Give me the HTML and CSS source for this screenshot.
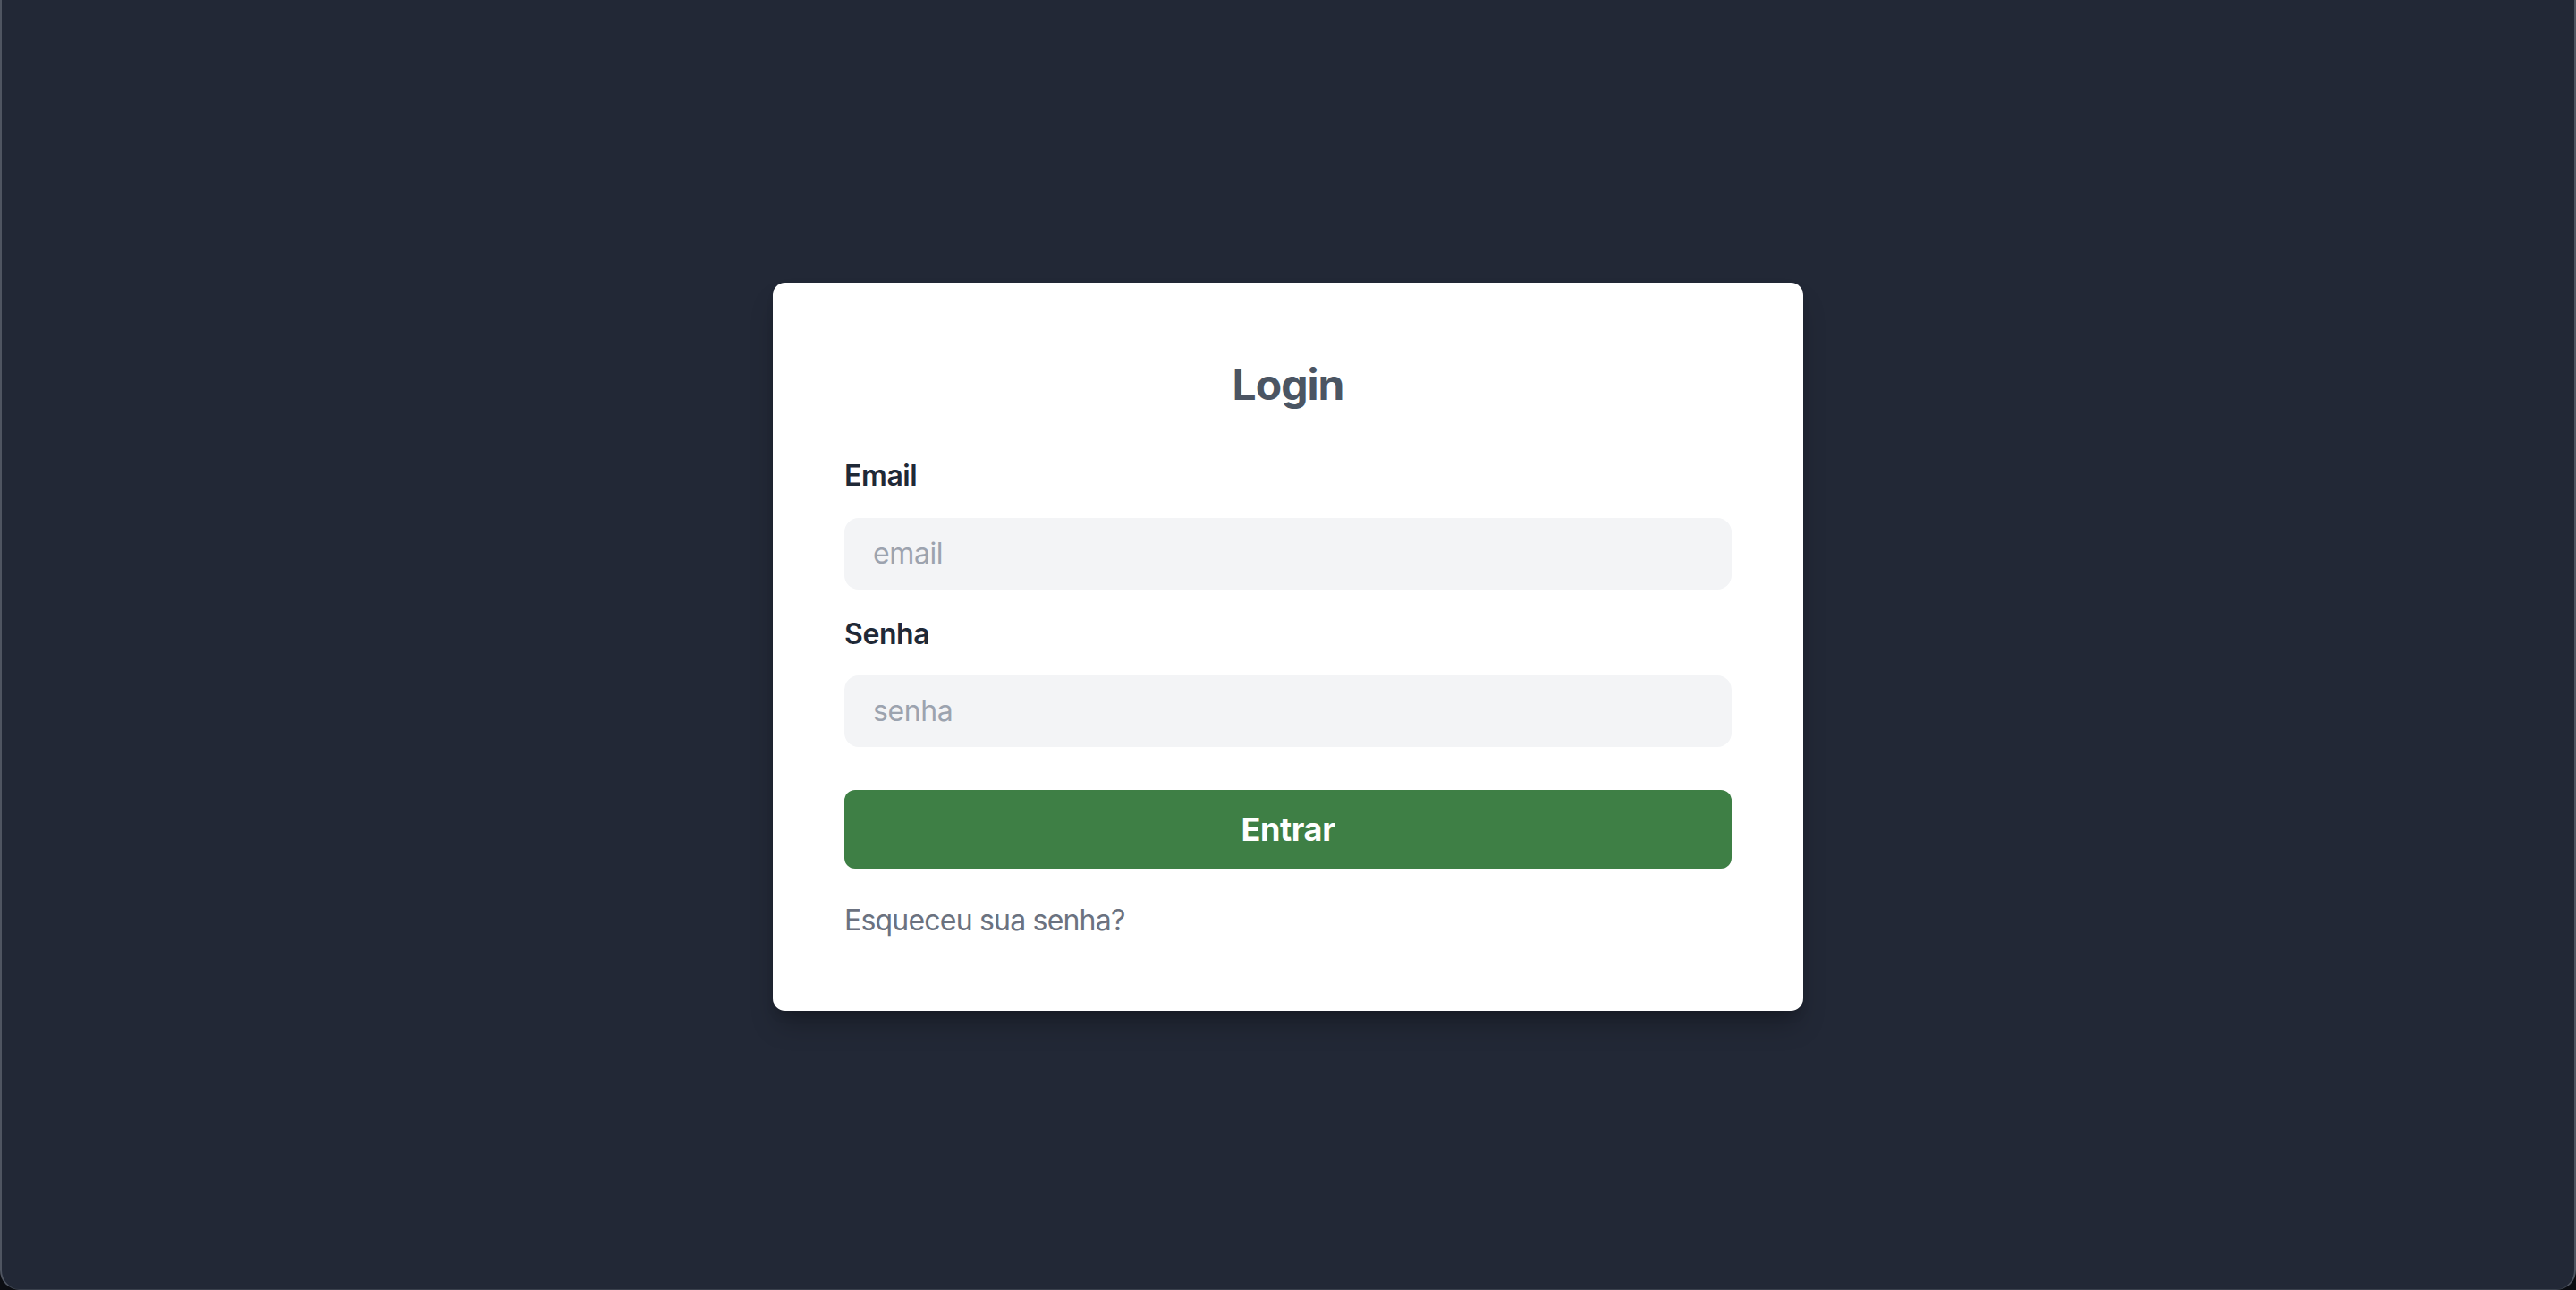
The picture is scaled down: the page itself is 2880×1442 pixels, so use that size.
FILE: index.html
```html
<!DOCTYPE html>
<html lang="pt-BR">
<head>
<meta charset="utf-8">
<title>Login</title>
<link rel="stylesheet" href="styles.css">
</head>
<body>
<div class="frame">
  <main class="card">
    <h1 class="title">Login</h1>
    <form class="form">
      <label class="label" for="email">Email</label>
      <input class="input" id="email" type="email" placeholder="email">
      <label class="label label-second" for="senha">Senha</label>
      <input class="input" id="senha" type="password" placeholder="senha">
      <button class="button" type="button">Entrar</button>
      <a class="link" href="#">Esqueceu sua senha?</a>
    </form>
  </main>
</div>
</body>
</html>
```

FILE: styles.css
```css
* { box-sizing: border-box; }
html, body {
  margin: 0;
  padding: 0;
  height: 100%;
  background: #0b0d12;
}
body {
  font-family: Inter, "Noto Sans", "Liberation Sans", sans-serif;
}
.frame {
  height: 1442px;
  width: 2880px;
  background: #222836;
  border-left: 2px solid #4f5561;
  border-right: 2px solid #4f5561;
  border-bottom: 1px solid #3a404c;
  border-radius: 0 0 22px 22px;
  display: flex;
  align-items: center;
  justify-content: center;
}
.card {
  width: 1152px;
  background: #ffffff;
  border-radius: 14px;
  padding: 82px 80px 77px;
  box-shadow: 0 20px 30px -6px rgba(0,0,0,0.25), 0 8px 12px -4px rgba(0,0,0,0.15);
  margin-top: 4px;
}
.title {
  margin: 0 0 46px;
  text-align: center;
  font-size: 48px;
  line-height: 64px;
  font-weight: 700;
  color: #4b5563;
  letter-spacing: -1px;
}
.form {
  display: flex;
  flex-direction: column;
}
.label {
  font-size: 32px;
  line-height: 48px;
  font-weight: 600;
  color: #1f2937;
  margin-bottom: 23px;
  letter-spacing: -0.4px;
}
.label-second {
  margin-top: 26px;
  margin-bottom: 22px;
}
.input {
  height: 80px;
  width: 100%;
  border: none;
  outline: none;
  border-radius: 16px;
  background: #f3f4f6;
  padding: 0 32px;
  font-family: inherit;
  font-size: 32px;
  color: #1f2937;
  letter-spacing: -0.4px;
}
.input::placeholder {
  color: #9ca3af;
}
.button {
  margin-top: 48px;
  height: 88px;
  width: 100%;
  border: none;
  border-radius: 12px;
  background: #3e7f45;
  color: #ffffff;
  font-family: inherit;
  font-size: 36px;
  font-weight: 700;
  letter-spacing: -0.4px;
  cursor: pointer;
}
.link {
  margin-top: 34px;
  font-size: 32px;
  line-height: 48px;
  color: #6b7280;
  text-decoration: none;
  letter-spacing: -0.8px;
}
```
